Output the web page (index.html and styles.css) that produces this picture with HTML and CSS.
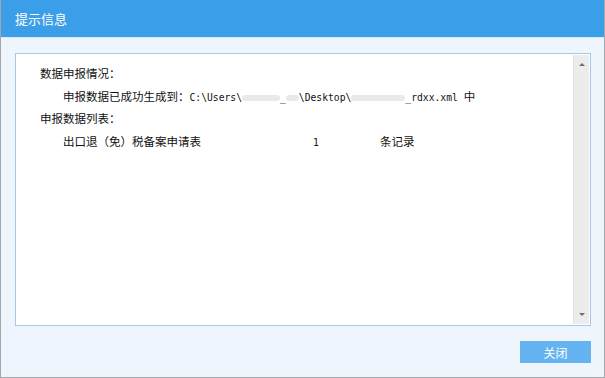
FILE: index.html
```html
<!DOCTYPE html>
<html>
<head>
  <title>提示信息</title>
  <link rel="stylesheet" href="styles.css">
</head>
<body>
  <div class="dialog">
    <div class="dialog-header">提示信息</div>

    <div class="dialog-body">
      <!-- message box with scrollbar -->
      <div class="message-box">
        <div class="message-text">
          <p class="line">数据申报情况：</p>
          <p class="line indent">申报数据已成功生成到：<span class="mono">C:\Users\</span><span class="blur" style="width:38px"></span><span class="mono">_</span><span class="blur" style="width:13px"></span><span class="mono">\Desktop\</span><span class="blur" style="width:54px"></span><span class="mono">_rdxx.xml&nbsp;</span>中</p>
          <p class="line">申报数据列表：</p>
          <p class="line indent"><span class="col-name">出口退（免）税备案申请表</span><span class="col-count mono">1</span><span>条记录</span></p>
        </div>
        <div class="scrollbar">
          <span class="arrow up"></span>
          <span class="arrow down"></span>
        </div>
      </div>
    </div>

    <div class="dialog-footer">
      <button class="btn-close">关闭</button>
    </div>
  </div>
</body>
</html>
```

FILE: styles.css
```css
html, body {
  margin: 0;
  padding: 0;
}
body {
  width: 605px;
  height: 378px;
  font-family: "Noto Sans CJK SC", "Liberation Sans", sans-serif;
  background-color: #ffffff;
}
.dialog {
  width: 605px;
  height: 378px;
  box-sizing: border-box;
  border: 1px solid #a3a7ab;
  border-top: none;
  background-color: #eef5fd;
  display: flex;
  flex-direction: column;
}
.dialog-header {
  height: 37px;
  line-height: 37px;
  padding-left: 14px;
  background-color: #3b9ee9;
  border-bottom: 1px solid #d6e9fb;
  color: #ffffff;
  font-size: 13px;
}
.dialog-body {
  padding: 15px 13px 0 14px;
}
.message-box {
  height: 273px;
  box-sizing: border-box;
  border: 1px solid #a4c8e8;
  background-color: #ffffff;
  display: flex;
}
.message-text {
  flex: 1;
  padding: 8px 0 0 24px;
  font-size: 11.5px;
  color: #111111;
}
.line {
  margin: 0;
  height: 22.6px;
  line-height: 22.6px;
  white-space: nowrap;
}
.indent {
  padding-left: 23px;
}
.mono {
  font-family: "DejaVu Sans Mono", monospace;
  font-size: 9.7px;
}
.blur {
  display: inline-block;
  height: 6px;
  vertical-align: 0;
  background-color: #e9e9e9;
  border-radius: 3px;
}
.col-name {
  display: inline-block;
  width: 250px;
}
.col-count {
  display: inline-block;
  width: 67px;
}
.scrollbar {
  width: 15px;
  margin: 1px 1px 1px 0;
  background-color: #ececec;
  border-left: 1px solid #e2e2e2;
  display: flex;
  flex-direction: column;
  justify-content: space-between;
  align-items: center;
  padding: 8px 0;
}
.arrow {
  width: 0;
  height: 0;
  border-left: 3px solid transparent;
  border-right: 3px solid transparent;
}
.arrow.up {
  border-bottom: 3px solid #6f6f6f;
}
.arrow.down {
  border-top: 3px solid #6f6f6f;
}
.dialog-footer {
  display: flex;
  justify-content: flex-end;
  padding: 15px 13px 0 0;
}
.btn-close {
  width: 71px;
  height: 22px;
  border: none;
  background-color: #66b3f1;
  color: #ffffff;
  font-family: "Noto Sans CJK SC", sans-serif;
  font-size: 12px;
  padding: 0;
}
```
